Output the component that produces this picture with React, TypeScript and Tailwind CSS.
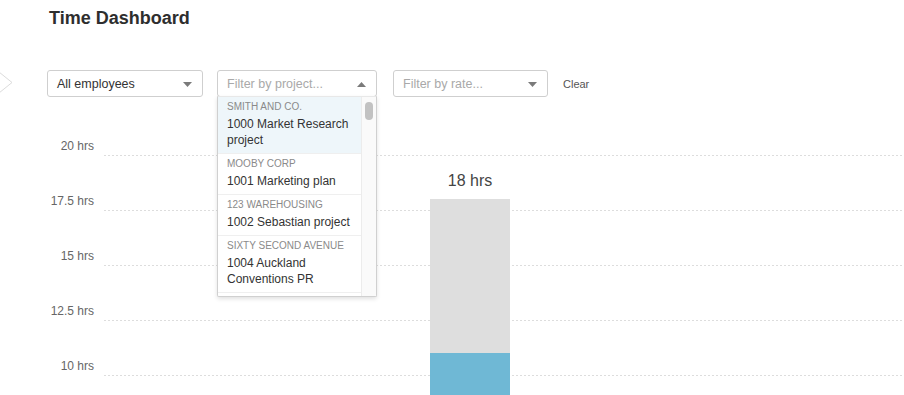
import React from "react";

const PROJECTS = [
  { client: "Smith and Co.", name: "1000 Market Research project", active: true },
  { client: "Mooby Corp", name: "1001 Marketing plan" },
  { client: "123 Warehousing", name: "1002 Sebastian project" },
  { client: "Sixty Second Avenue", name: "1004 Auckland Conventions PR" },
];

// only the ticks that fit in the view; the axis runs on down to 0 hrs
const TICKS = [20, 17.5, 15, 12.5, 10];
const ROW_H = 55;
const PX_PER_HR = ROW_H / 2.5;
// chart y of the 0 hrs line
const ZERO_Y = (20 / 2.5 + 1) * ROW_H - 1;

const BAR = { total: 18, billable: 11, left: 430 };

function Caret({ up = false }: { up?: boolean }) {
  return (
    <svg width="9" height="5" viewBox="0 0 9 5" className="shrink-0">
      <path d={up ? "M0 5 L4.5 0 L9 5 Z" : "M0 0 L9 0 L4.5 5 Z"} fill="#7a7a7a" />
    </svg>
  );
}

function Select({ label, placeholder = false, width, up = false }: { label: string; placeholder?: boolean; width: string; up?: boolean }) {
  return (
    <div
      className={`flex h-[27px] items-center justify-between rounded-[3px] border border-[#cfcfcf] bg-white pl-[9px] pr-[10px] pt-[1px] text-[12.5px] ${width} ${
        placeholder ? "text-[#a9a9a9]" : "text-[#333]"
      }`}
    >
      <span>{label}</span>
      <Caret up={up} />
    </div>
  );
}

export default function App() {
  const barTop = ZERO_Y - BAR.total * PX_PER_HR;
  const barH = BAR.total * PX_PER_HR;
  const blueH = BAR.billable * PX_PER_HR;

  return (
    <div className="relative h-[395px] w-[904px] overflow-hidden bg-white font-['Liberation_Sans',Arial,sans-serif] text-[#333]">
      <h1 className="pl-[49px] pt-[8px] text-[18px] font-bold leading-[20px] text-[#2e2e2e]">Time Dashboard</h1>

      {/* filters */}
      <div className="relative z-10 mt-[42px] flex h-[27px] items-center">
        <svg width="13" height="23" viewBox="0 0 13 23" className="-mt-[3px] shrink-0">
          <path d="M-1 1 L12 11.5 L-1 22" fill="none" stroke="#dcdcdc" strokeWidth="1" />
        </svg>
        <div className="ml-[34px]">
          <Select label="All employees" width="w-[156px]" />
        </div>
        <div className="relative ml-[14px]">
          <Select label="Filter by project..." placeholder up width="w-[160px]" />
          <div className="absolute left-0 top-[26px] flex h-[201px] w-[160px] overflow-hidden rounded-b-[2px] border border-[#d0d0d0] border-t-[#e8e8e8] bg-white shadow-[0_2px_4px_rgba(0,0,0,0.12)]">
            <ul className="flex-1">
              {PROJECTS.map((p) => (
                <li
                  key={p.name}
                  className={`border-b border-[#efefef] pb-[5px] pl-[9px] pr-[6px] pt-[4px] ${p.active ? "bg-[#eef6fa]" : ""}`}
                >
                  <div className="text-[10px] uppercase leading-[12px] text-[#8a8a8a]">{p.client}</div>
                  <div className="mt-[3px] text-[12px] leading-[16px] text-[#333]">{p.name}</div>
                </li>
              ))}
            </ul>
            <div className="flex w-[15px] justify-center border-l border-[#ececec] bg-[#fafafa] pt-[5px]">
              <div className="h-[18px] w-[8px] rounded-[4px] bg-[#c2c2c2]" />
            </div>
          </div>
        </div>
        <div className="ml-[16px]">
          <Select label="Filter by rate..." placeholder width="w-[155px]" />
        </div>
        <button className="ml-[15px] pt-[1px] text-[11px] text-[#555]">Clear</button>
      </div>

      {/* chart */}
      <div className="relative mt-[4px] h-[600px]">
        {TICKS.map((t) => (
          <div key={t} className="flex h-[55px] items-end">
            <div className="w-[94px] pb-[3px] text-right text-[12px] leading-[14px] text-[#666]">{t} hrs</div>
            <div className="ml-[10px] h-px flex-1 bg-[linear-gradient(to_right,#dddddd_2px,transparent_2px)] bg-[length:4px_1px] bg-repeat-x" />
          </div>
        ))}

        <div className="absolute flex w-[80px] flex-col items-center" style={{ left: BAR.left, top: barTop - 27 }}>
          <div className="mb-[9px] text-[16px] leading-[18px] text-[#444]">{BAR.total} hrs</div>
          <div className="flex w-full flex-col justify-end bg-[#dedede]" style={{ height: barH }}>
            <div className="w-full bg-[#6fb8d5]" style={{ height: blueH }} />
          </div>
        </div>
      </div>
    </div>
  );
}
